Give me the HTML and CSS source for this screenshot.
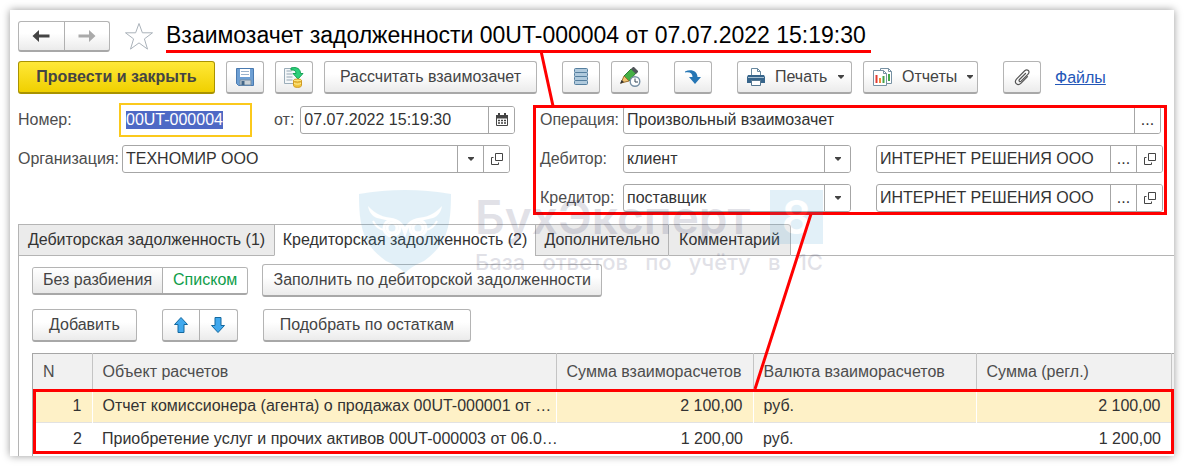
FILE: index.html
```html
<!DOCTYPE html>
<html lang="ru">
<head>
<meta charset="utf-8">
<title>Взаимозачет задолженности</title>
<link rel="stylesheet" href="styles.css">
</head>
<body>
<svg class="defs" width="0" height="0" aria-hidden="true">
  <symbol id="open" viewBox="0 0 14 14"><path d="M5.500 1.500h7v7h-7zM3.500 5.500h-2v7h7v-2" fill="none" stroke="#444"/></symbol>
  <symbol id="caret" viewBox="0 0 8 8"><path d="M1 2h6v1L4 6 1 3z" fill="#444"/></symbol>
</svg>
<main class="window">
  <header class="heading">
    <div class="group nav">
      <button type="button" aria-label="Назад"><svg width="20" height="16" viewBox="0 0 20 16"><path d="M1.500 8 8 2v4.500h10.500v3H8V14z" fill="#444"/></svg></button>
      <button type="button" aria-label="Вперед"><svg width="20" height="16" viewBox="0 0 20 16"><path d="M18.500 8 12 2v4.500H1.500v3H12V14z" fill="#aaa"/></svg></button>
    </div>
    <svg class="star" width="30" height="29" viewBox="0 0 30 29"><path d="m15 1.500 3.400 9.300h10.100l-8.100 6.100 3.100 10.200-8.500-6.200-8.500 6.200 3.100-10.200-8.100-6.100h10.100z" fill="#fff" stroke="#aab2ba"/></svg>
    <h1>Взаимозачет задолженности 00UT-000004 от 07.07.2022 15:19:30</h1>
  </header>

  <div class="toolbar">
    <button type="button" class="btn primary">Провести и закрыть</button>
    <button type="button" class="btn icon" aria-label="Записать"><svg width="20" height="20" viewBox="0 0 20 20"><path d="M1.500 1.500h17v17h-15l-2-2z" fill="#6d9fd4" stroke="#4a7ab0"/><path d="M5 2h10v8H5z" fill="#fff"/><path d="M6 4.500h8M6 7.500h8" stroke="#9bb3cc"/><path d="M5 13h11v5H5z" fill="#ccd3d8" stroke="#7890a5"/><path d="M6.500 14h3v4h-3z" fill="#456889"/></svg></button>
    <button type="button" class="btn icon" aria-label="Провести"><svg width="22" height="22" viewBox="0 0 22 22"><path d="M1.500 2.500h13v15h-13z" fill="#f4f7f9" stroke="#9badb9"/><path d="M3.500 5h5M3.500 8h6M3.500 11h6M3.500 14h6" stroke="#93a5b2"/><path d="M8 2c6-1.500 9.500 1 9.500 5.500h2.500L15 13l-5-5.500h3C13 5 11.500 3.500 8 4z" fill="#2cd07a" stroke="#17a257"/><path d="M10.500 14.500v5c0 2.500 8 2.500 8 0v-5" fill="#f2c63c" stroke="#cf9a24"/><ellipse cx="14.500" cy="14.500" rx="4" ry="1.500" fill="#ffe67a" stroke="#cf9a24"/><path d="M11 17c1 1.500 6 1.500 7 0" fill="none" stroke="#fff0a4"/></svg></button>
    <button type="button" class="btn calc">Рассчитать взаимозачет</button>
    <button type="button" class="btn icon gap" aria-label="Движения документа"><svg width="14" height="20" viewBox="0 0 14 20"><g fill="#b0cadd" stroke="#557f9f"><rect x=".5" y="1.500" width="13" height="4" rx="1"/><rect x=".5" y="5.500" width="13" height="4" rx="1"/><rect x=".5" y="9.500" width="13" height="4" rx="1"/><rect x=".5" y="13.500" width="13" height="4" rx="1"/></g></svg></button>
    <button type="button" class="btn icon" aria-label="Изменить дату"><svg width="22" height="22" viewBox="0 0 22 22"><path d="m5 10 7-7 5 4-7 8z" fill="#45b045" stroke="#2d7c35"/><path d="m12 3 2-2h1l4 4v1l-2 2z" fill="#50555a"/><path d="m2 17 3-7 5 5z" fill="#f1c472" stroke="#9b7031"/><path d="m1 18 1.500-4 2.500 2z" fill="#333"/><circle cx="16" cy="15.500" r="4.800" fill="#fff" stroke="#7890a5" stroke-width="1.400"/><path d="M16 12.500v3.500h3" fill="none" stroke="#345"/></svg></button>
    <button type="button" class="btn icon gap" aria-label="Создать на основании"><svg width="20" height="20" viewBox="0 0 20 20"><path d="M2 4.500C8 1.500 14.500 4 14.500 10h3.500L12 17 6 10h3.500C9.500 6.500 7 4.500 2 5.500z" fill="#2676b5"/></svg></button>
    <button type="button" class="btn menu gap"><svg width="20" height="20" viewBox="0 0 20 20"><path d="M5.500 9V1.500h6l3 3V9" fill="#fff" stroke="#68889f"/><path d="M11.500 1.500v3h3" fill="none" stroke="#68889f"/><path d="M2 8h16l1 2v6H1v-6z" fill="#37658b"/><path d="M2 10.500h16" stroke="#a6c0d3"/><path d="M5.500 13.500h9v5h-9z" fill="#fff" stroke="#557791"/></svg>Печать<svg class="caret" width="8" height="8"><use href="#caret"/></svg></button>
    <button type="button" class="btn menu"><svg width="21" height="20" viewBox="0 0 21 20"><path d="M8.500 1.500h8l3 3v12h-11z" fill="#fff" stroke="#7791a3"/><path d="M16.500 1.500v3h3" fill="none" stroke="#7791a3"/><path d="M17 7v7" stroke="#45a64b" stroke-width="2"/><path d="M1.500 3.500h10l3 3v12h-13z" fill="#fff" stroke="#7791a3"/><path d="M11.500 3.500v3h3" fill="none" stroke="#7791a3"/><path d="M4.500 8v8" stroke="#e23a33" stroke-width="2"/><path d="M8 11v5" stroke="#ef8b3c" stroke-width="2"/><path d="M11.500 9v7" stroke="#45a64b" stroke-width="2"/></svg>Отчеты<svg class="caret" width="8" height="8"><use href="#caret"/></svg></button>
    <button type="button" class="btn icon gap" aria-label="Присоединенные файлы"><svg width="18" height="18" viewBox="0 0 18 18"><path d="m12.500 5.500-6 6c-1.200 1.300.3 2.800 1.600 1.600l7-7c2.600-2.700-.8-5.800-3.400-3.300l-8 8c-3.600 3.700.8 7.800 4.400 4.300l6.400-6.400" fill="none" stroke="#555" stroke-width="1.200" stroke-linecap="round"/></svg></button>
    <a class="files" href="#files">Файлы</a>
  </div>

  <form class="form">
    <div class="side">
      <div class="line">
        <label class="name" for="num">Номер:</label>
        <input class="number" id="num" value="00UT-000004" autofocus>
        <label class="from" for="date">от:</label>
        <div class="field date"><input id="date" value="07.07.2022 15:19:30"><button type="button" aria-label="Календарь"><svg width="14" height="14" viewBox="0 0 14 14"><path d="M1.500 2.500h11v10h-11z" fill="#fff" stroke="#444"/><path d="M1 2h12v3.500H1zM3 0h2v3H3zM9 0h2v3H9z" fill="#444"/><path d="M3 7.500h8M3 10h8" stroke="#444" stroke-width="1.500" stroke-dasharray="2 1"/></svg></button></div>
      </div>
      <div class="line">
        <label class="name org" for="org">Организация:</label>
        <div class="field company"><input id="org" value="ТЕХНОМИР ООО"><button type="button" aria-label="Выбрать"><svg width="8" height="8"><use href="#caret"/></svg></button><button type="button" aria-label="Открыть"><svg width="14" height="14"><use href="#open"/></svg></button></div>
      </div>
    </div>
    <div class="side marked">
      <div class="line operation">
        <label class="name" for="op">Операция:</label>
        <div class="field wide"><input id="op" value="Произвольный взаимозачет"><button type="button" aria-label="Выбрать">...</button></div>
      </div>
      <div class="line">
        <label class="name" for="deb">Дебитор:</label>
        <div class="field kind"><select id="deb"><option>клиент</option></select><span class="drop"><svg width="8" height="8"><use href="#caret"/></svg></span></div>
        <div class="field partner"><input aria-label="Дебитор, контрагент" value="ИНТЕРНЕТ РЕШЕНИЯ ООО"><button type="button" aria-label="Выбрать">...</button><button type="button" aria-label="Открыть"><svg width="14" height="14"><use href="#open"/></svg></button></div>
      </div>
      <div class="line">
        <label class="name" for="cred">Кредитор:</label>
        <div class="field kind"><select id="cred"><option>поставщик</option></select><span class="drop"><svg width="8" height="8"><use href="#caret"/></svg></span></div>
        <div class="field partner"><input aria-label="Кредитор, контрагент" value="ИНТЕРНЕТ РЕШЕНИЯ ООО"><button type="button" aria-label="Выбрать">...</button><button type="button" aria-label="Открыть"><svg width="14" height="14"><use href="#open"/></svg></button></div>
      </div>
    </div>
  </form>

  <div class="tabs" role="tablist">
    <button type="button" role="tab" class="t-deb">Дебиторская задолженность (1)</button>
    <button type="button" role="tab" aria-selected="true" class="active">Кредиторская задолженность (2)</button>
    <button type="button" role="tab" class="t-more">Дополнительно</button>
    <button type="button" role="tab" class="t-note">Комментарий</button>
  </div>

  <section class="page">
    <div class="commands first">
      <div class="group split"><button type="button">Без разбиения</button><button type="button" class="chosen">Списком</button></div>
      <button type="button" class="btn fill">Заполнить по дебиторской задолженности</button>
    </div>
    <div class="commands">
      <button type="button" class="btn">Добавить</button>
      <div class="group move">
        <button type="button" aria-label="Вверх"><svg width="16" height="18" viewBox="0 0 16 18"><path d="m8 1.500 6.500 7h-3.500v8H5v-8H1.500z" fill="#41a9ee" stroke="#14699f"/></svg></button>
        <button type="button" aria-label="Вниз"><svg width="16" height="18" viewBox="0 0 16 18"><path d="m8 16.500 6.500-7h-3.500v-8H5v8H1.500z" fill="#41a9ee" stroke="#14699f"/></svg></button>
      </div>
      <button type="button" class="btn">Подобрать по остаткам</button>
    </div>
    <div class="grid">
      <table>
        <colgroup><col class="c-n"><col><col class="c-sum"><col class="c-cur"><col class="c-reg"><col class="c-end"></colgroup>
        <thead><tr><th>N</th><th>Объект расчетов</th><th>Сумма взаиморасчетов</th><th>Валюта взаиморасчетов</th><th>Сумма (регл.)</th><th></th></tr></thead>
        <tbody>
          <tr class="current"><td class="num">1</td><td class="object">Отчет комиссионера (агента) о продажах 00UT-000001 от …</td><td class="num">2 100,00</td><td>руб.</td><td class="num">2 100,00</td><td></td></tr>
          <tr><td class="num">2</td><td class="object">Приобретение услуг и прочих активов 00UT-000003 от 06.0…</td><td class="num">1 200,00</td><td>руб.</td><td class="num">1 200,00</td><td></td></tr>
        </tbody>
      </table>
    </div>
  </section>

  <div class="watermark" aria-hidden="true">
    <svg width="94" height="84" viewBox="0 0 94 84"><path d="M1 4Q47-4 93 4c0 35-5 51-27 67Q54 76 47 83 40 76 28 71C6 55 1 39 1 4z" fill="#3d9cd0"/><path d="M10 16c8 9 16 11 24 12 6 1 10 4 13 9 3-5 7-8 13-9 8-1 16-3 24-12-1 6-4 10-9 12l-13 3c-6 1-10 4-12 8l-3 9-3-9c-2-4-6-7-12-8l-13-3c-5-2-8-6-9-12z" fill="#fff"/><g fill="none" stroke="#fff" stroke-width="3"><circle cx="34" cy="38" r="8"/><circle cx="60" cy="38" r="8"/></g><g fill="#3d9cd0" stroke="#fff" stroke-width="3"><circle cx="34" cy="38" r="5"/><circle cx="60" cy="38" r="5"/></g><path d="M15 31c3 6 6 8 11 9M79 31c-3 6-6 8-11 9" fill="none" stroke="#fff" stroke-width="2"/></svg>
    <div class="brand">
      <div class="brandline"><span>БухЭксперт</span><b>8</b></div>
      <div class="motto"><span>База</span><span>ответов</span><span>по</span><span>учёту</span><span>в</span><span>1С</span></div>
    </div>
  </div>
  <svg class="links" width="1164" height="446" aria-hidden="true"><path d="m531 41 12 55M801 204l-56 175" stroke="#f00" stroke-width="3"/></svg>
</main>
<script>
document.getElementById('num').focus();
document.getElementById('num').select();
</script>
</body>
</html>
```
FILE: styles.css
```css
* { box-sizing: border-box; }
body {
  margin: 0;
  padding: 10px;
  background: #fff;
  color: #333;
  font: 16px/20px "Liberation Sans", Arial, sans-serif;
}
button, input, select { font: inherit; color: inherit; margin: 0; }
svg { flex: none; }
.defs { position: absolute; }
.window {
  position: relative;
  overflow: clip;
  overflow-clip-margin: 10px;
  padding: 10px 0 0 8px;
  background: #fff;
  box-shadow: 0 0 8px rgba(0, 0, 0, .4);
}
.heading { display: flex; align-items: center; height: 32px; }
.star { margin: 0 12px 0 14px; }
h1 {
  align-self: stretch;
  height: 33px;
  margin: 0;
  padding-right: 5px;
  border-bottom: 3px solid #f00;
  color: #000;
  font-size: 23px;
  font-weight: 400;
  line-height: 30px;
  white-space: nowrap;
}
.btn, .group {
  display: flex;
  align-items: center;
  justify-content: center;
  height: 33px;
  border: 1px solid #b4b4b4;
  border-bottom: 2px solid #a8a8a8;
  border-radius: 3px;
  background: linear-gradient(#fff 40%, #ebebeb);
  color: #444;
  white-space: nowrap;
}
.btn { padding: 0 16px; }
.group { align-items: stretch; overflow: hidden; }
.group button {
  display: flex;
  flex: 1 1 auto;
  align-items: center;
  justify-content: center;
  padding: 0 10px;
  border: 0;
  background: none;
}
.group button + button { border-left: 1px solid #b0b0b0; }
.nav { width: 92px; height: 31px; }
.toolbar { display: flex; align-items: center; gap: 11px; margin-top: 9px; }
.btn.primary {
  width: 197px;
  border-color: #a99300;
  background: linear-gradient(#ffe838, #f0d000);
  font-weight: 700;
}
.toolbar .icon { width: 38px; padding: 0; }
.calc { width: 213px; }
.toolbar .gap { margin-left: 14px; }
.menu { gap: 9px; padding: 0 6px 0 8px; width: 115px; justify-content: flex-start; }
.menu .caret { margin-left: auto; }
.files { margin-left: 3px; color: #2457b8; }

.form {
  display: grid;
  grid-template-columns: 497px 1fr;
  gap: 25px;
  margin: 12px 11px 0 0;
}
.side { display: flex; flex-direction: column; gap: 11px; min-width: 0; }
.line { display: flex; align-items: center; height: 28px; }
.name { flex: none; width: 83px; color: #4d4d4d; }
.side:first-child .name { width: 101px; }
.side:first-child .org { width: 104px; }
.from { margin: 0 6px 0 22px; color: #4d4d4d; }
.number {
  width: 133px;
  height: 34px;
  padding: 0 5px;
  border: 2px solid #fbc91c;
  outline: 0;
  background: #fff;
}
.number::selection { background: #4e69c5; color: #fff; }
.field {
  display: flex;
  height: 28px;
  border: 1px solid #a6a6a6;
  border-radius: 3px;
  background: #fff;
  overflow: hidden;
}
.field input, .field select {
  flex: 1;
  width: 0;
  min-width: 0;
  padding: 0 3px;
  border: 0;
  outline: 0;
  background: none;
  appearance: none;
}
.field button, .drop {
  display: flex;
  flex: none;
  align-items: center;
  justify-content: center;
  width: 26px;
  padding: 0;
  border: 0;
  border-left: 1px solid #a6a6a6;
  background: #fff;
}
.date { flex: 1; }
.company { width: 388px; }
.wide { flex: 1; }
.operation { margin-right: 2px; }
.kind { width: 228px; margin-right: 25px; }
.partner { flex: 1; }
.marked { position: relative; }
.marked::after, .grid::after {
  content: "";
  position: absolute;
  inset: -1px -4px -3px -7px;
  border: 3px solid #f00;
  pointer-events: none;
}

.tabs {
  display: flex;
  height: 32px;
  margin-top: 12px;
}
.tabs::after { content: ""; flex: 1; border-bottom: 1px solid #b4b4b4; }
.tabs button {
  padding: 0;
  border: 1px solid #b4b4b4;
  border-right-width: 0;
  background: #ebebeb;
  white-space: nowrap;
}
.t-deb { width: 256px; }
.t-more { width: 133px; }
.tabs .t-note { width: 123px; border-right-width: 1px; border-radius: 0 3px 0 0; }
.tabs .active { width: 261px; border-bottom-color: #fff; background: #fff; }
.page { padding: 8px 0 0 13px; border-left: 1px solid #b4b4b4; }
.commands { display: flex; align-items: center; gap: 25px; margin-bottom: 11px; }
.commands.first { gap: 14px; margin-bottom: 12px; }
.fill { width: 340px; padding: 0; }
.split { height: 28px; }
.split button:first-child { background: linear-gradient(#fff, #e8e8e8); }
.split .chosen { background: #fff; color: #0f9d4a; }
.move { width: 76px; }
.grid { position: relative; border-left: 1px solid #a6a6a6; }
.grid::after { inset: 36px 0 2px 0; }
table { width: 100%; border-collapse: collapse; table-layout: fixed; border-top: 1px solid #a6a6a6; }
th, td {
  height: 33px;
  padding: 0 10px;
  text-align: left;
  font-weight: 400;
  white-space: nowrap;
}
.object { padding-right: 0; }
th { height: 36px; border-right: 1px solid #c4c4c4; border-bottom: 1px solid #c4c4c4; background: #f1f1f1; color: #4d4d4d; }
tbody tr + tr td { border-top: 1px solid #e2e2e2; }
.current td { background: #fef1c7; border-right: 1px solid #fff; }
.num { text-align: right; }
.c-n { width: 59px; }
.c-sum { width: 197px; }
.c-cur { width: 223px; }
.c-reg { width: 195px; }
.c-end { width: 3px; }
th:last-child, td:last-child { padding: 0; border-right: 0; }

.watermark {
  position: absolute;
  left: 348px;
  top: 180px;
  display: flex;
  gap: 23px;
  opacity: .14;
  pointer-events: none;
}
.brand { width: 348px; font-family: Inter, "Open Sans", sans-serif; color: #30305c; }
.brandline { display: flex; justify-content: space-between; font-size: 46px; line-height: 54px; font-weight: 600; }
.brandline b { width: 53px; text-align: center; background: #3d9cd0; color: #fff; font-weight: 600; }
.motto { display: flex; justify-content: space-between; margin-top: 6px; font-size: 22px; line-height: 24px; font-weight: 500; }
.links { position: absolute; left: 0; top: 0; pointer-events: none; }
```
